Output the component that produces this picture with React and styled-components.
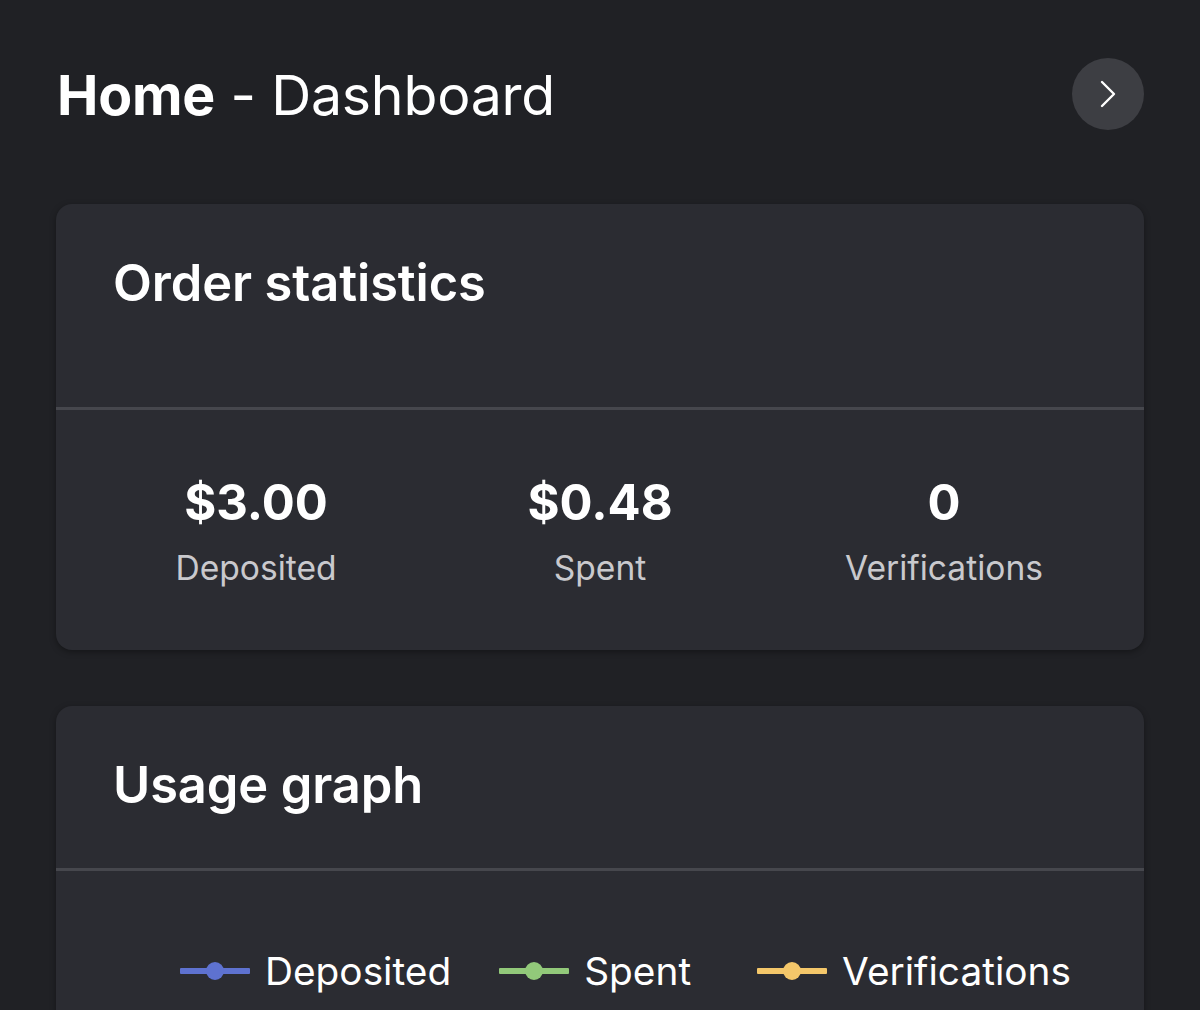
import React from 'react';
import styled, { createGlobalStyle } from 'styled-components';

const GlobalStyle = createGlobalStyle`
    html, body {
        margin: 0;
        padding: 0;
        background: #202125;
        font-family: Inter, "Noto Sans", sans-serif;
        color: #ffffff;
    }
    * {
        box-sizing: border-box;
    }
`;

const Page = styled.main`
    height: 1010px;
    overflow: hidden;
    padding: 58px 56px 0 56px;
    display: flex;
    flex-direction: column;
`;

const TopBar = styled.header`
    display: flex;
    align-items: center;
    justify-content: space-between;
    height: 72px;
    margin-bottom: 74px;
    padding-left: 1px;
`;

const PageTitle = styled.h1`
    margin: 0;
    font-size: 55.4px;
    font-weight: 400;
    letter-spacing: -0.2px;
    b {
        font-weight: 700;
    }
`;

const RoundButton = styled.button`
    width: 72px;
    height: 72px;
    border-radius: 50%;
    border: none;
    background: #3d3e43;
    display: flex;
    align-items: center;
    justify-content: center;
    padding: 0;
    cursor: pointer;
`;

const Card = styled.section`
    flex-shrink: 0;
    background: #2b2c32;
    border-radius: 16px;
    box-shadow: 0 2px 6px rgba(0, 0, 0, 0.35);
    margin-bottom: 56px;
    overflow: hidden;
`;

const CardHeader = styled.div`
    height: ${p => p.$height}px;
    padding: 51px 57px 0;
    border-bottom: 3px solid #46474d;
`;

const CardTitle = styled.h2`
    margin: 0;
    font-size: 50.6px;
    line-height: 56px;
    font-weight: 600;
    letter-spacing: -0.1px;
`;

const StatsRow = styled.div`
    display: grid;
    grid-template-columns: repeat(3, 1fr);
    padding: 64px 28px 61px;
`;

const Stat = styled.div`
    display: flex;
    flex-direction: column;
    align-items: center;
`;

const StatValue = styled.div`
    font-size: 49px;
    line-height: 58px;
    font-weight: 700;
`;

const StatLabel = styled.div`
    margin-top: 15px;
    font-size: 33.6px;
    line-height: 42px;
    color: #c9c9cd;
`;

const Legend = styled.div`
    display: flex;
    align-items: center;
    padding: 75px 0 40px 124px;
    gap: 48px;
`;

const LegendItem = styled.div`
    display: flex;
    align-items: center;
    gap: 15px;
    font-size: 38.8px;
    line-height: 50px;
    margin-left: ${p => p.$offset || 0}px;
`;

const Marker = styled.span`
    position: relative;
    width: 70px;
    height: 6px;
    background: ${p => p.$color};
    border-radius: 1px;
    &::after {
        content: '';
        position: absolute;
        left: 26px;
        top: -6px;
        width: 18px;
        height: 18px;
        border-radius: 50%;
        background: ${p => p.$color};
    }
`;

const stats = [
    { value: '$3.00', label: 'Deposited' },
    { value: '$0.48', label: 'Spent' },
    { value: '0', label: 'Verifications' },
];

const series = [
    { label: 'Deposited', color: '#5e72d0' },
    { label: 'Spent', color: '#92c97a' },
    { label: 'Verifications', color: '#f4c76a', offset: 18 },
];

export default function App() {
    return (
        <>
            <GlobalStyle />
            <Page>
                <TopBar>
                    <PageTitle><b>Home</b> - Dashboard</PageTitle>
                    <RoundButton aria-label="Next">
                        <svg width="20" height="30" viewBox="0 0 20 30" fill="none">
                            <path d="M4 3 L16 15 L4 27" stroke="#ffffff" strokeWidth="2.4" strokeLinecap="round" strokeLinejoin="round" />
                        </svg>
                    </RoundButton>
                </TopBar>

                <Card>
                    <CardHeader $height={206}>
                        <CardTitle>Order statistics</CardTitle>
                    </CardHeader>
                    <StatsRow>
                        {stats.map(s => (
                            <Stat key={s.label}>
                                <StatValue>{s.value}</StatValue>
                                <StatLabel>{s.label}</StatLabel>
                            </Stat>
                        ))}
                    </StatsRow>
                </Card>

                <Card>
                    <CardHeader $height={165}>
                        <CardTitle>Usage graph</CardTitle>
                    </CardHeader>
                    <Legend>
                        {series.map(s => (
                            <LegendItem key={s.label} $offset={s.offset}>
                                <Marker $color={s.color} />
                                {s.label}
                            </LegendItem>
                        ))}
                    </Legend>
                </Card>
            </Page>
        </>
    );
}
